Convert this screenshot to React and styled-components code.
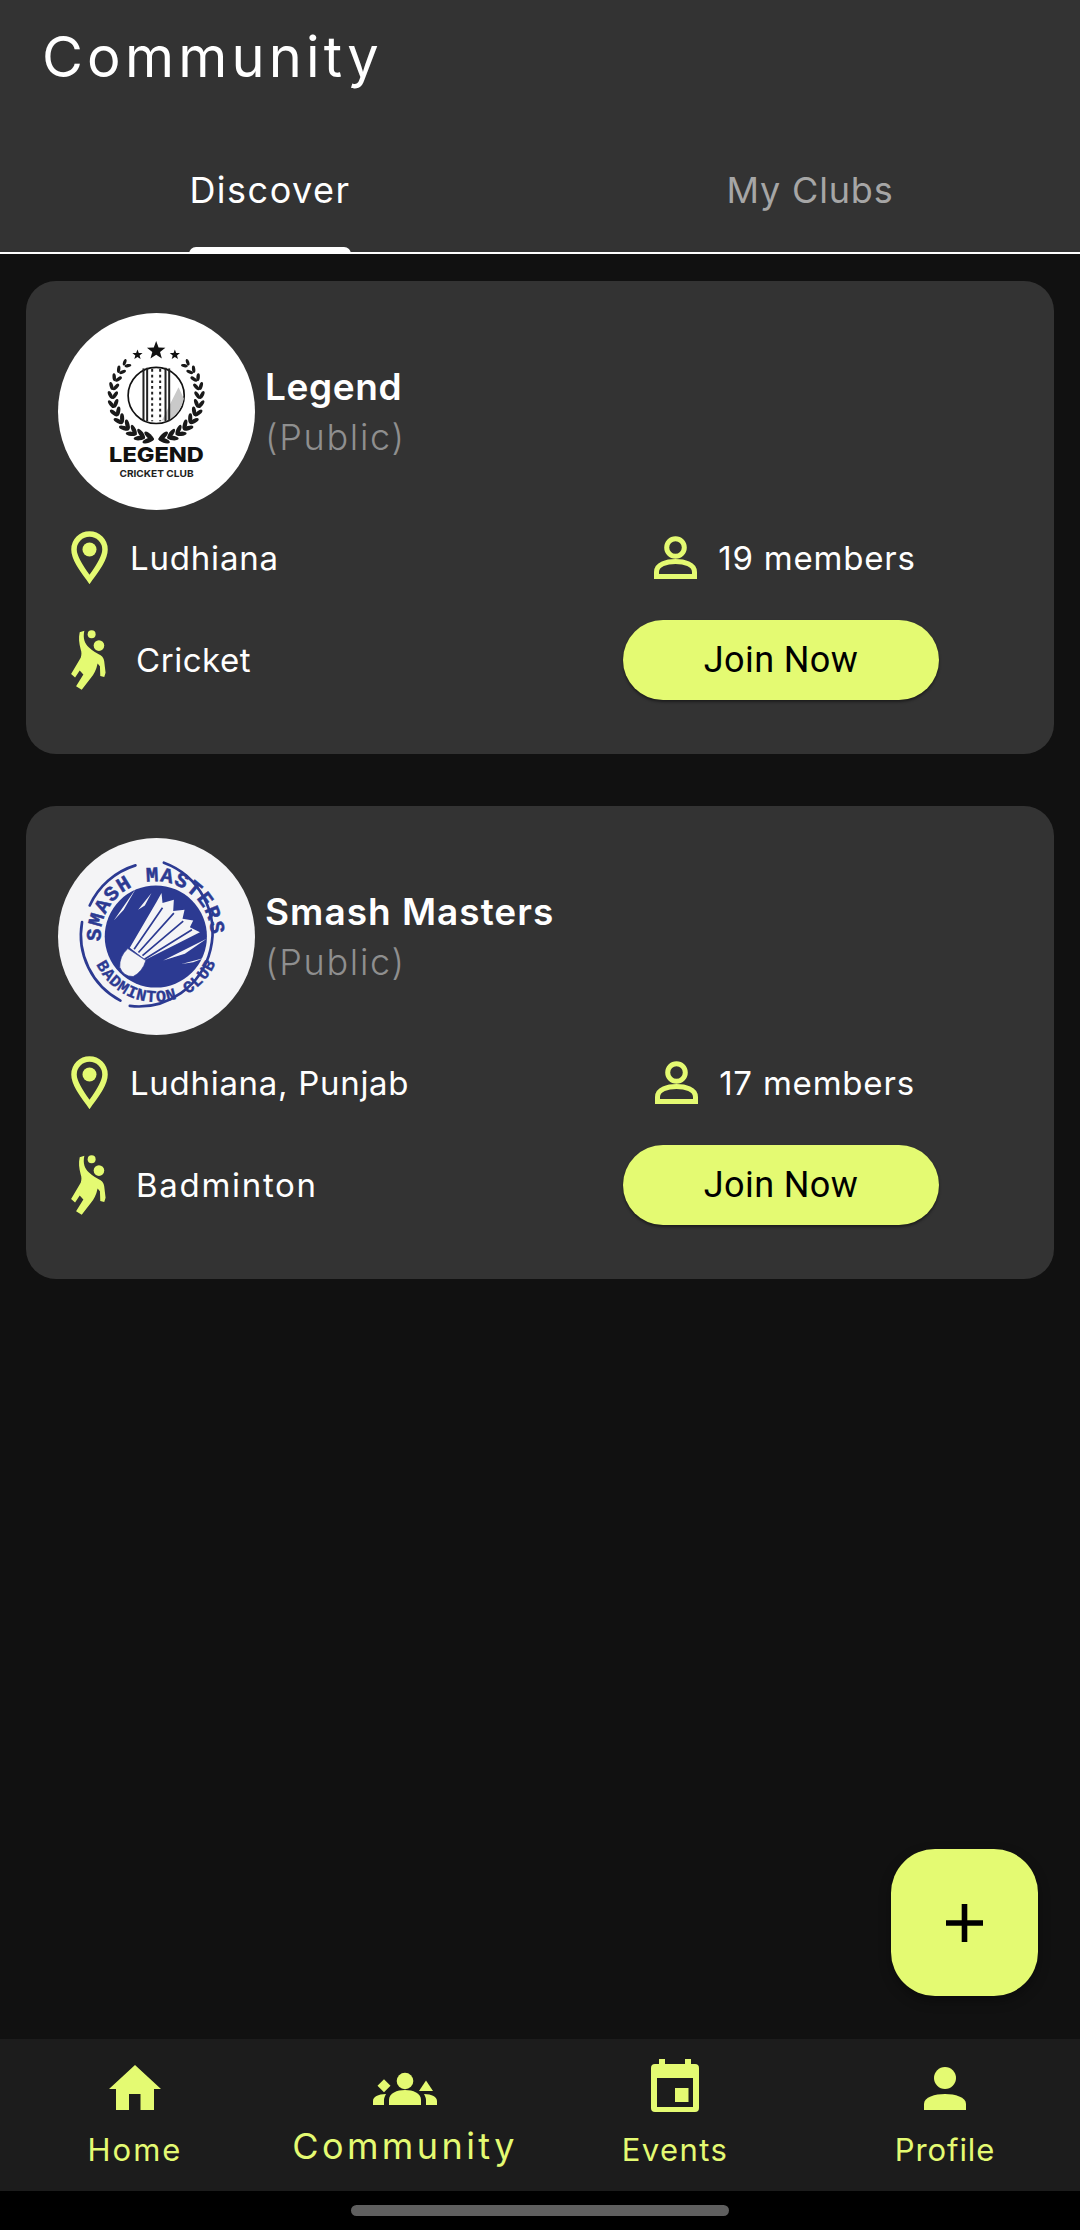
import React from "react";
import styled, { createGlobalStyle } from "styled-components";

const LIME = "#e4fa72";

const Global = createGlobalStyle`
  html, body { margin: 0; padding: 0; background: #111111; }
  body { font-family: Inter, "Noto Sans", sans-serif; }
  * { box-sizing: border-box; }
`;

const Page = styled.div`
  position: relative;
  width: 1080px;
  height: 2230px;
  display: flex;
  flex-direction: column;
  background: #111111;
  overflow: hidden;
`;

const Header = styled.header`
  background: #333333;
  padding-top: 19px;
  border-bottom: 2px solid #ffffff;
`;

const Title = styled.h1`
  margin: 0 0 65px;
  padding-left: 42px;
  font-size: 56px;
  line-height: 76px;
  font-weight: 400;
  letter-spacing: 4.2px;
  color: #ffffff;
`;

const Tabs = styled.div`
  display: grid;
  grid-template-columns: 1fr 1fr;
  height: 92px;
`;

const Tab = styled.div`
  display: flex;
  justify-content: center;
`;

const TabLabel = styled.span`
  position: relative;
  height: 92px;
  font-size: 36px;
  line-height: 60px;
  letter-spacing: ${(p) => p.$spacing}px;
  color: ${(p) => (p.$active ? "#ffffff" : "#a6a6a6")};
`;

const TabMarker = styled.i`
  position: absolute;
  left: 0;
  right: 0;
  bottom: -2px;
  height: 7px;
  background: #ffffff;
  border-radius: 7px 7px 0 0;
`;

const Main = styled.main`
  flex: 1;
  display: flex;
  flex-direction: column;
  gap: 52px;
  padding: 27px 26px 0;
`;

const Card = styled.article`
  height: 473px;
  padding: 32px 115px 0 0;
  border-radius: 30px;
  background: #333333;
`;

const CardTop = styled.div`
  display: flex;
  align-items: center;
  gap: 10px;
  padding-left: 32px;
`;

const Avatar = styled.svg`
  display: block;
  width: 197px;
  height: 197px;
  flex: none;
`;

const NameBlock = styled.div`
  display: flex;
  flex-direction: column;
`;

const ClubName = styled.div`
  font-size: 37px;
  line-height: 50px;
  font-weight: 600;
  letter-spacing: ${(p) => p.$spacing}px;
  color: #ffffff;
`;

const Visibility = styled.div`
  font-size: 36px;
  line-height: 50px;
  font-weight: 300;
  letter-spacing: 1.7px;
  color: #8f8f8f;
`;

const InfoGrid = styled.div`
  display: grid;
  grid-template-columns: 1fr 316px;
  grid-template-rows: 53px 80px;
  row-gap: 36px;
  margin-top: 21px;
  padding-left: 45px;
`;

const Cell = styled.div`
  display: flex;
  align-items: center;
  gap: ${(p) => p.$gap}px;
`;

const MembersCell = styled(Cell)`
  justify-content: center;
  padding-left: 8px;
`;

const InfoText = styled.span`
  font-size: 33px;
  line-height: 44px;
  letter-spacing: ${(p) => p.$spacing}px;
  color: #ffffff;
`;

const JoinButton = styled.button`
  width: 316px;
  height: 80px;
  border: 0;
  border-radius: 40px;
  background: ${LIME};
  box-shadow: 0 2px 3px rgba(0, 0, 0, 0.45);
  font-family: Roboto, sans-serif;
  font-size: 36px;
  letter-spacing: 0.4px;
  color: #000000;
`;

const Fab = styled.button`
  position: absolute;
  right: 42px;
  bottom: 234px;
  width: 147px;
  height: 147px;
  display: flex;
  align-items: center;
  justify-content: center;
  border: 0;
  border-radius: 44px;
  background: ${LIME};
  box-shadow: 0 5px 12px rgba(0, 0, 0, 0.35);
`;

const Nav = styled.nav`
  display: grid;
  grid-template-columns: repeat(4, 270px);
  height: 152px;
  padding-top: 20px;
  background: #1c1c1c;
`;

const NavItem = styled.div`
  display: flex;
  flex-direction: column;
  align-items: center;
  color: ${LIME};
`;

const NavIconSlot = styled.div`
  height: 54px;
  padding-top: ${(p) => p.$top}px;
`;

const NavLabel = styled.span`
  margin-top: ${(p) => (p.$active ? 11 : 15)}px;
  font-size: ${(p) => (p.$active ? 36 : 31)}px;
  line-height: 44px;
  letter-spacing: ${(p) => p.$spacing}px;
`;

const SystemBar = styled.div`
  height: 39px;
  padding-top: 14px;
  background: #000000;
`;

const HomeHandle = styled.div`
  width: 378px;
  height: 11px;
  margin: 0 auto;
  border-radius: 6px;
  background: #5f5f5f;
`;

const Pin = () => (
  <svg width="37" height="53" viewBox="0 0 37 53">
    <path d="M18.5 48.5C12 39.5 3 28 3 18.5a15.5 15.5 0 1 1 31 0C34 28 25 39.5 18.5 48.5Z" fill="none" stroke={LIME} strokeWidth="5.5" />
    <circle cx="18.5" cy="18.5" r="7" fill={LIME} />
  </svg>
);

const PersonOutline = () => (
  <svg width="43" height="43" viewBox="0 0 43 43">
    <circle cx="21.5" cy="11.5" r="8.8" fill="none" stroke={LIME} strokeWidth="5" />
    <path d="M2.5 40.5V36C2.5 28 13 25.5 21.5 25.5S40.5 28 40.5 36v4.5Z" fill="none" stroke={LIME} strokeWidth="5" />
  </svg>
);

const Player = () => (
  <svg width="35" height="60" viewBox="96 361 105 181">
    <circle cx="158" cy="374" r="12" fill={LIME} />
    <circle cx="180" cy="408" r="16" fill={LIME} />
    <path
      d="M122 368L136 363C131 385 137 402 150 414C160 424 172 430 185 437C192 441 195 448 196 456L200 490L196 503L184 500L183 470L176 462C172 482 165 495 156 505L128 541L111 531L133 495L122 483L108 504L96 494L125 445C128 435 128 428 125 420C120 400 118 385 122 368Z"
      fill={LIME}
    />
  </svg>
);

const HomeIcon = () => (
  <svg width="52" height="45" viewBox="0 0 52 45" style={{ display: "block" }}>
    <path d="M26 0L52 24H45V45H31.5V29H20V45H7V24H0Z" fill={LIME} />
  </svg>
);

const GroupIcon = () => (
  <svg width="64" height="33" viewBox="0 0 64 33" style={{ display: "block" }}>
    <g fill={LIME}>
      <circle cx="32" cy="9" r="8.3" />
      <path d="M16 33V28C16 21 24 18 32 18S48 21 48 28V33Z" />
      <path d="M11 7.2L17.5 13.7L11 20.2L4.5 13.7Z" />
      <path d="M53 8.5L60 19H46Z" />
      <path d="M0 33V29C0 25 5 22 13 22C12 24 11 26 11 28V33Z" />
      <path d="M64 33V29C64 25 59 22 51 22C52 24 53 26 53 28V33Z" />
    </g>
  </svg>
);

const CalendarIcon = () => (
  <svg width="48" height="53" viewBox="0 0 48 53" style={{ display: "block" }}>
    <path
      fillRule="evenodd"
      d="M8 0H14V5H34V0H40V5H44Q48 5 48 9V49Q48 53 44 53H4Q0 53 0 49V9Q0 5 4 5H8ZM6 19V48H42V19Z"
      fill={LIME}
    />
    <rect x="24" y="29" width="13.5" height="14" fill={LIME} />
  </svg>
);

const ProfileIcon = () => (
  <svg width="42" height="43" viewBox="0 0 42 43" style={{ display: "block" }}>
    <circle cx="21" cy="11" r="11" fill={LIME} />
    <path d="M0 43V37C0 30 11 27 21 27S42 30 42 37V43Z" fill={LIME} />
  </svg>
);

const PlusIcon = () => (
  <svg width="37" height="38" viewBox="0 0 37 38">
    <path d="M15.7 0H21.3V16.2H37V21.8H21.3V38H15.7V21.8H0V16.2H15.7Z" fill="#000000" />
  </svg>
);

const Star = ({ x, y, r }) => {
  const pts = Array.from({ length: 10 }, (_, i) => {
    const a = (Math.PI / 5) * i - Math.PI / 2;
    const d = i % 2 ? r * 0.42 : r;
    return `${x + d * Math.cos(a)},${y + d * Math.sin(a)}`;
  }).join(" ");
  return <polygon points={pts} fill="#111111" />;
};

const laurel = [];
for (let side = -1; side <= 1; side += 2) {
  for (let i = 0; i < 12; i++) {
    const deg = 10 + i * 11.5;
    const t = (deg * Math.PI) / 180;
    const R = 131;
    const x = 378 + side * R * Math.sin(t);
    const y = 315 + R * Math.cos(t);
    const tangent = side * -deg;
    const rx = 18 - i * 0.7;
    const ry = 7 - i * 0.2;
    laurel.push({ x: x + side * 6 * Math.sin(t), y: y + 6 * Math.cos(t), rot: tangent + side * 28, rx, ry, key: `o${side}${i}` });
    laurel.push({ x: x - side * 8 * Math.sin(t), y: y - 8 * Math.cos(t), rot: tangent - side * 32, rx, ry, key: `i${side}${i}` });
  }
}

const LegendLogo = () => (
  <Avatar viewBox="84 68 590 590">
    <circle cx="379" cy="363" r="295" fill="#ffffff" />
    <Star x={378} y={181} r={29} />
    <Star x={322} y={193} r={16} />
    <Star x={434} y={193} r={16} />
    {laurel.map((l) => (
      <ellipse key={l.key} cx={l.x} cy={l.y} rx={l.rx} ry={l.ry} transform={`rotate(${l.rot} ${l.x} ${l.y})`} fill="#1a1a1a" />
    ))}
    <circle cx="378" cy="315" r="84" fill="#ffffff" stroke="#111111" strokeWidth="5" />
    <path d="M445 290L461 325Q452 365 418 388L395 390Z" fill="#c9c9c9" />
    <g fill="#222222">
      <rect x="337" y="234" width="6" height="158" />
      <rect x="348" y="232" width="6" height="160" />
      <rect x="403" y="232" width="6" height="160" />
      <rect x="414" y="234" width="6" height="158" />
    </g>
    <path d="M366 236V392M390 236V392" stroke="#222222" strokeWidth="6" strokeDasharray="8 9" />
    <text x="379" y="515" textAnchor="middle" textLength="284" lengthAdjust="spacingAndGlyphs" fontFamily="Inter, sans-serif" fontWeight="800" fontSize="62" fill="#111111">
      LEGEND
    </text>
    <text x="379" y="560" textAnchor="middle" textLength="222" lengthAdjust="spacingAndGlyphs" fontFamily="Inter, sans-serif" fontWeight="700" fontSize="28" fill="#222222">
      CRICKET CLUB
    </text>
  </Avatar>
);

const BLUE = "#2c3a92";
const PAPER = "#f4f4f6";

const SmashLogo = () => (
  <Avatar viewBox="55 53 590 590">
    <defs>
      <path id="smashTop" d="M183.6 362A165 165 0 1 1 510.5 376.6" />
      <path id="smashBottom" d="M169.5 431A197 197 0 0 0 538 399" />
    </defs>
    <circle cx="350" cy="348" r="295" fill={PAPER} />
    <circle cx="348" cy="348" r="153" fill={BLUE} />
    <g fill="none" stroke={BLUE} strokeWidth="8" strokeLinecap="round">
      <path d="M150 255A222 222 0 0 1 287 135" />
      <path d="M372 127A222 222 0 0 1 270 556" />
      <path d="M127 305A222 222 0 0 0 242 540" />
    </g>
    <text fontFamily="'Liberation Mono', monospace" fontWeight="700" fontSize="62" letterSpacing="3.5" fill={BLUE} stroke={BLUE} strokeWidth="1.5">
      <textPath href="#smashTop">SMASH MASTERS</textPath>
    </text>
    <text fontFamily="'Liberation Mono', monospace" fontWeight="700" fontSize="50" letterSpacing="2.2" fill={BLUE} stroke={BLUE} strokeWidth="1">
      <textPath href="#smashBottom">BADMINTON CLUB</textPath>
    </text>
    <g transform="translate(180 150)">
      <path d="M42 150L108 55L72 118ZM115 118L155 68L135 105ZM190 270L320 205L255 250ZM245 280L315 262L280 275Z" fill={PAPER} />
      <path d="M90 232L170 95L185 68L188 98L222 88L220 122L254 118L248 145L280 150L270 170L300 185L137 268Z" fill={PAPER} />
      <path d="M103 236L188 112M116 246L222 128M128 255L250 152M134 266L276 178" stroke={BLUE} strokeWidth="5" fill="none" />
      <path d="M84 234L138 270Q128 304 100 318Q70 318 60 290Q58 258 84 234Z" fill={PAPER} stroke={BLUE} strokeWidth="2" />
    </g>
  </Avatar>
);

const clubs = [
  { name: "Legend", nameSpacing: 0.6, Logo: LegendLogo, place: "Ludhiana", placeSpacing: 0.8, members: "19 members", sport: "Cricket", sportSpacing: 0.55 },
  { name: "Smash Masters", nameSpacing: 1, Logo: SmashLogo, place: "Ludhiana, Punjab", placeSpacing: 0.7, members: "17 members", sport: "Badminton", sportSpacing: 1.7 },
];

const navItems = [
  { label: "Home", Icon: HomeIcon, top: 6, spacing: 2 },
  { label: "Community", Icon: GroupIcon, top: 13, active: true, spacing: 3.4 },
  { label: "Events", Icon: CalendarIcon, top: 0, spacing: 1.4 },
  { label: "Profile", Icon: ProfileIcon, top: 8, spacing: 0.9 },
];

export default function App() {
  return (
    <Page>
      <Global />
      <Header>
        <Title>Community</Title>
        <Tabs>
          <Tab>
            <TabLabel $active $spacing={1.5}>
              Discover
              <TabMarker />
            </TabLabel>
          </Tab>
          <Tab>
            <TabLabel $spacing={0.85}>My Clubs</TabLabel>
          </Tab>
        </Tabs>
      </Header>
      <Main>
        {clubs.map(({ name, nameSpacing, Logo, place, placeSpacing, members, sport, sportSpacing }) => (
          <Card key={name}>
            <CardTop>
              <Logo />
              <NameBlock>
                <ClubName $spacing={nameSpacing}>{name}</ClubName>
                <Visibility>(Public)</Visibility>
              </NameBlock>
            </CardTop>
            <InfoGrid>
              <Cell $gap={22}>
                <Pin />
                <InfoText $spacing={placeSpacing}>{place}</InfoText>
              </Cell>
              <MembersCell $gap={21}>
                <PersonOutline />
                <InfoText $spacing={0.8}>{members}</InfoText>
              </MembersCell>
              <Cell $gap={30}>
                <Player />
                <InfoText $spacing={sportSpacing}>{sport}</InfoText>
              </Cell>
              <JoinButton>Join Now</JoinButton>
            </InfoGrid>
          </Card>
        ))}
      </Main>
      <Fab aria-label="Add">
        <PlusIcon />
      </Fab>
      <Nav>
        {navItems.map(({ label, Icon, top, active, spacing }) => (
          <NavItem key={label}>
            <NavIconSlot $top={top}>
              <Icon />
            </NavIconSlot>
            <NavLabel $active={active} $spacing={spacing}>{label}</NavLabel>
          </NavItem>
        ))}
      </Nav>
      <SystemBar>
        <HomeHandle />
      </SystemBar>
    </Page>
  );
}
